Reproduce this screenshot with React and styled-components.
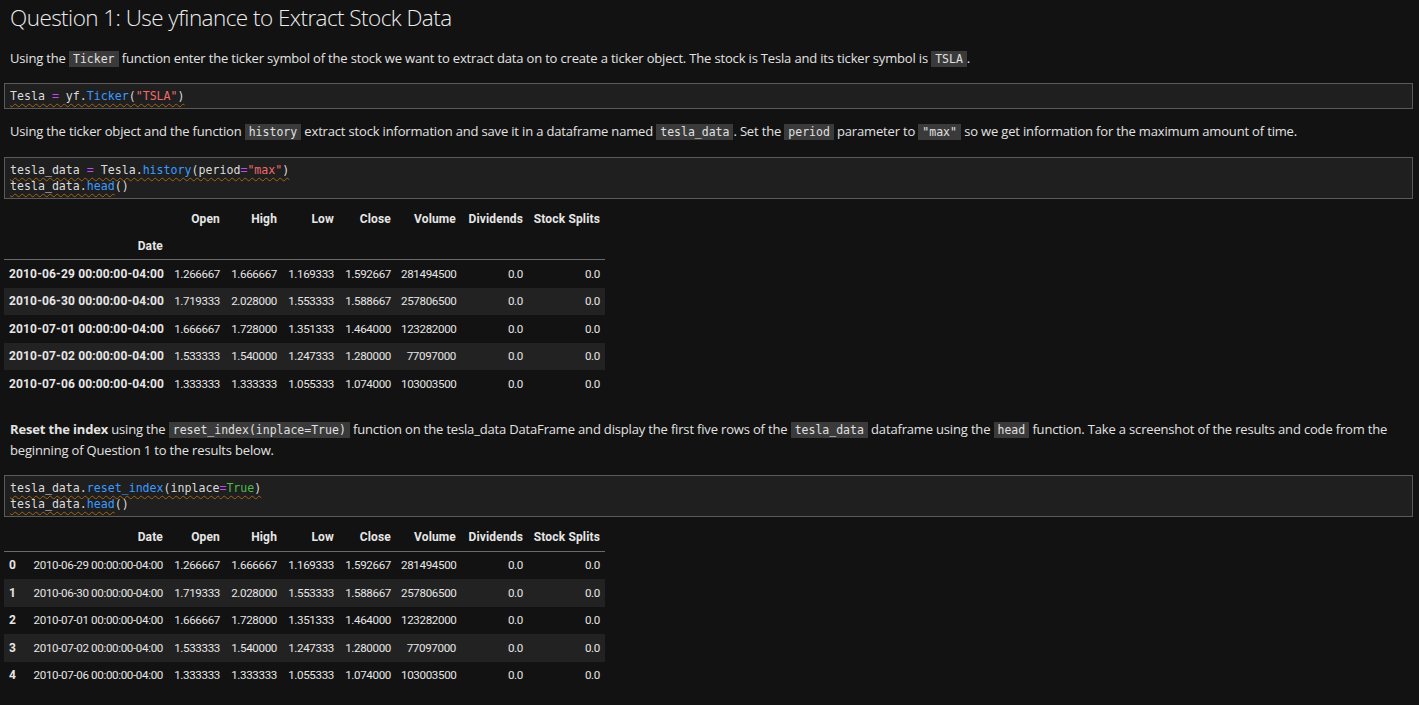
import React from "react";
import styled, { createGlobalStyle } from "styled-components";

const Global = createGlobalStyle`
  html, body { margin: 0; padding: 0; background: #121212; }
  body { font-family: "Open Sans", "Noto Sans", sans-serif; color: #e4e4e4; }
`;

const Page = styled.div`
  display: flex;
  flex-direction: column;
  padding: 0 6px 20px 4px;
  width: 1419px;
  box-sizing: border-box;
`;

const Title = styled.h1`
  margin: 3px 0 0 6px;
  font-size: 22.5px;
  font-weight: 300;
  letter-spacing: -0.55px;
  line-height: 30px;
  color: #ececec;
`;

const Para = styled.p`
  margin: ${(p) => p.$mt || 0}px 8px 0 6px;
  font-size: 13px;
  letter-spacing: -0.17px;
  line-height: 20px;
  color: #e2e2e2;
`;

const Inline = styled.code`
  font-family: "DejaVu Sans Mono", "Liberation Mono", monospace;
  font-size: 11.5px;
  letter-spacing: 0;
  background: #3a3a3a;
  color: #e0e0e0;
  padding: 1px 4px;
`;

const CodeCell = styled.pre`
  margin: ${(p) => p.$mt || 0}px 0 0 0;
  padding: 4px 5px;
  background: #1f1f1f;
  border: 1px solid #5a5a5a;
  font-family: "DejaVu Sans Mono", "Liberation Mono", monospace;
  font-size: 11.6px;
  line-height: 16px;
  color: #dcdcdc;
`;

const Sq = styled.span`
  text-decoration: underline wavy rgba(196, 120, 24, 0.75);
  text-decoration-thickness: 1px;
  text-underline-offset: 3px;
`;

const Tok = styled.span`
  color: ${(p) =>
    p.$k === "op" ? "#c04cf0" : p.$k === "fn" ? "#3a9bff" : p.$k === "str" ? "#ef6b6b" : p.$k === "kw" ? "#4cbb4c" : "#dcdcdc"};
`;

const Table = styled.table`
  margin: ${(p) => p.$mt || 0}px 0 0 0;
  border-collapse: collapse;
  table-layout: fixed;
  width: 601px;
  font-family: Roboto, "Liberation Sans", sans-serif;
  font-size: 11.6px;
  letter-spacing: -0.35px;
  color: #e6e6e6;
`;

const Col = styled.col`
  width: ${(p) => p.$w}px;
`;

const Thead = styled.thead`
  border-bottom: 1px solid #6a6a6a;
`;

const Th = styled.th`
  height: 27px;
  padding: 0 5px;
  text-align: right;
  font-size: 12px;
  font-weight: 700;
  letter-spacing: 0.15px;
  white-space: nowrap;
  vertical-align: middle;
`;

const Tr = styled.tr`
  background: ${(p) => (p.$odd ? "#222222" : "transparent")};
`;

const Td = styled.td`
  height: 27.5px;
  padding: 0 5px;
  text-align: ${(p) => (p.$left ? "left" : "right")};
  font-size: ${(p) => (p.$bold ? "12px" : "11.6px")};
  font-weight: ${(p) => (p.$bold ? 700 : 400)};
  letter-spacing: ${(p) => (p.$bold ? "0.15px" : "-0.35px")};
  white-space: nowrap;
  vertical-align: middle;
`;

const cols = ["Open", "High", "Low", "Close", "Volume", "Dividends", "Stock Splits"];
const colW = [57, 57, 57, 57, 65, 67, 77];
const rows = [
  ["2010-06-29 00:00:00-04:00", "1.266667", "1.666667", "1.169333", "1.592667", "281494500", "0.0", "0.0"],
  ["2010-06-30 00:00:00-04:00", "1.719333", "2.028000", "1.553333", "1.588667", "257806500", "0.0", "0.0"],
  ["2010-07-01 00:00:00-04:00", "1.666667", "1.728000", "1.351333", "1.464000", "123282000", "0.0", "0.0"],
  ["2010-07-02 00:00:00-04:00", "1.533333", "1.540000", "1.247333", "1.280000", "77097000", "0.0", "0.0"],
  ["2010-07-06 00:00:00-04:00", "1.333333", "1.333333", "1.055333", "1.074000", "103003500", "0.0", "0.0"],
];

function DateIndexTable() {
  return (
    <Table $mt={6}>
      <colgroup>
        <Col $w={164} />
        {colW.map((w, i) => (
          <Col key={i} $w={w} />
        ))}
      </colgroup>
      <Thead>
        <tr>
          <Th />
          {cols.map((c) => (
            <Th key={c}>{c}</Th>
          ))}
        </tr>
        <tr>
          <Th>Date</Th>
          {cols.map((c) => (
            <Th key={c} />
          ))}
        </tr>
      </Thead>
      <tbody>
        {rows.map((r, i) => (
          <Tr key={i} $odd={i % 2 === 1}>
            {r.map((v, j) => (
              <Td key={j} $bold={j === 0}>
                {v}
              </Td>
            ))}
          </Tr>
        ))}
      </tbody>
    </Table>
  );
}

function ResetTable() {
  return (
    <Table $mt={7}>
      <colgroup>
        <Col $w={20} />
        <Col $w={144} />
        {colW.map((w, i) => (
          <Col key={i} $w={w} />
        ))}
      </colgroup>
      <Thead>
        <tr>
          <Th />
          <Th>Date</Th>
          {cols.map((c) => (
            <Th key={c}>{c}</Th>
          ))}
        </tr>
      </Thead>
      <tbody>
        {rows.map((r, i) => (
          <Tr key={i} $odd={i % 2 === 1}>
            <Td $bold $left>
              {i}
            </Td>
            {r.map((v, j) => (
              <Td key={j}>{v}</Td>
            ))}
          </Tr>
        ))}
      </tbody>
    </Table>
  );
}

export default function App() {
  return (
    <>
      <Global />
      <Page>
        <Title>Question 1: Use yfinance to Extract Stock Data</Title>
        <Para $mt={15}>
          Using the <Inline>Ticker</Inline> function enter the ticker symbol of the stock we want to extract data on to
          create a ticker object. The stock is Tesla and its ticker symbol is <Inline>TSLA</Inline>.
        </Para>
        <CodeCell $mt={14}>
          <Sq>
            Tesla <Tok $k="op">=</Tok> yf.<Tok $k="fn">Ticker</Tok>(<Tok $k="str">"TSLA"</Tok>)
          </Sq>
        </CodeCell>
        <Para $mt={12}>
          Using the ticker object and the function <Inline>history</Inline> extract stock information and save it in a
          dataframe named <Inline>tesla_data</Inline>. Set the <Inline>period</Inline> parameter to{" "}
          <Inline>"max"</Inline> so we get information for the maximum amount of time.
        </Para>
        <CodeCell $mt={15}>
          <Sq>
            tesla_data <Tok $k="op">=</Tok> Tesla.<Tok $k="fn">history</Tok>(period<Tok $k="op">=</Tok>
            <Tok $k="str">"max"</Tok>)
          </Sq>
          {"\n"}
          <Sq>
            tesla_data.<Tok $k="fn">head</Tok>
          </Sq>
          ()
        </CodeCell>
        <DateIndexTable />
        <Para $mt={21}>
          <b>Reset the index</b> using the <Inline>reset_index(inplace=True)</Inline> function on the tesla_data
          DataFrame and display the first five rows of the <Inline>tesla_data</Inline> dataframe using the{" "}
          <Inline>head</Inline> function. Take a screenshot of the results and code from the beginning of Question 1 to
          the results below.
        </Para>
        <CodeCell $mt={15}>
          <Sq>
            tesla_data.<Tok $k="fn">reset_index</Tok>(inplace<Tok $k="op">=</Tok>
            <Tok $k="kw">True</Tok>)
          </Sq>
          {"\n"}
          <Sq>
            tesla_data.<Tok $k="fn">head</Tok>
          </Sq>
          ()
        </CodeCell>
        <ResetTable />
      </Page>
    </>
  );
}
